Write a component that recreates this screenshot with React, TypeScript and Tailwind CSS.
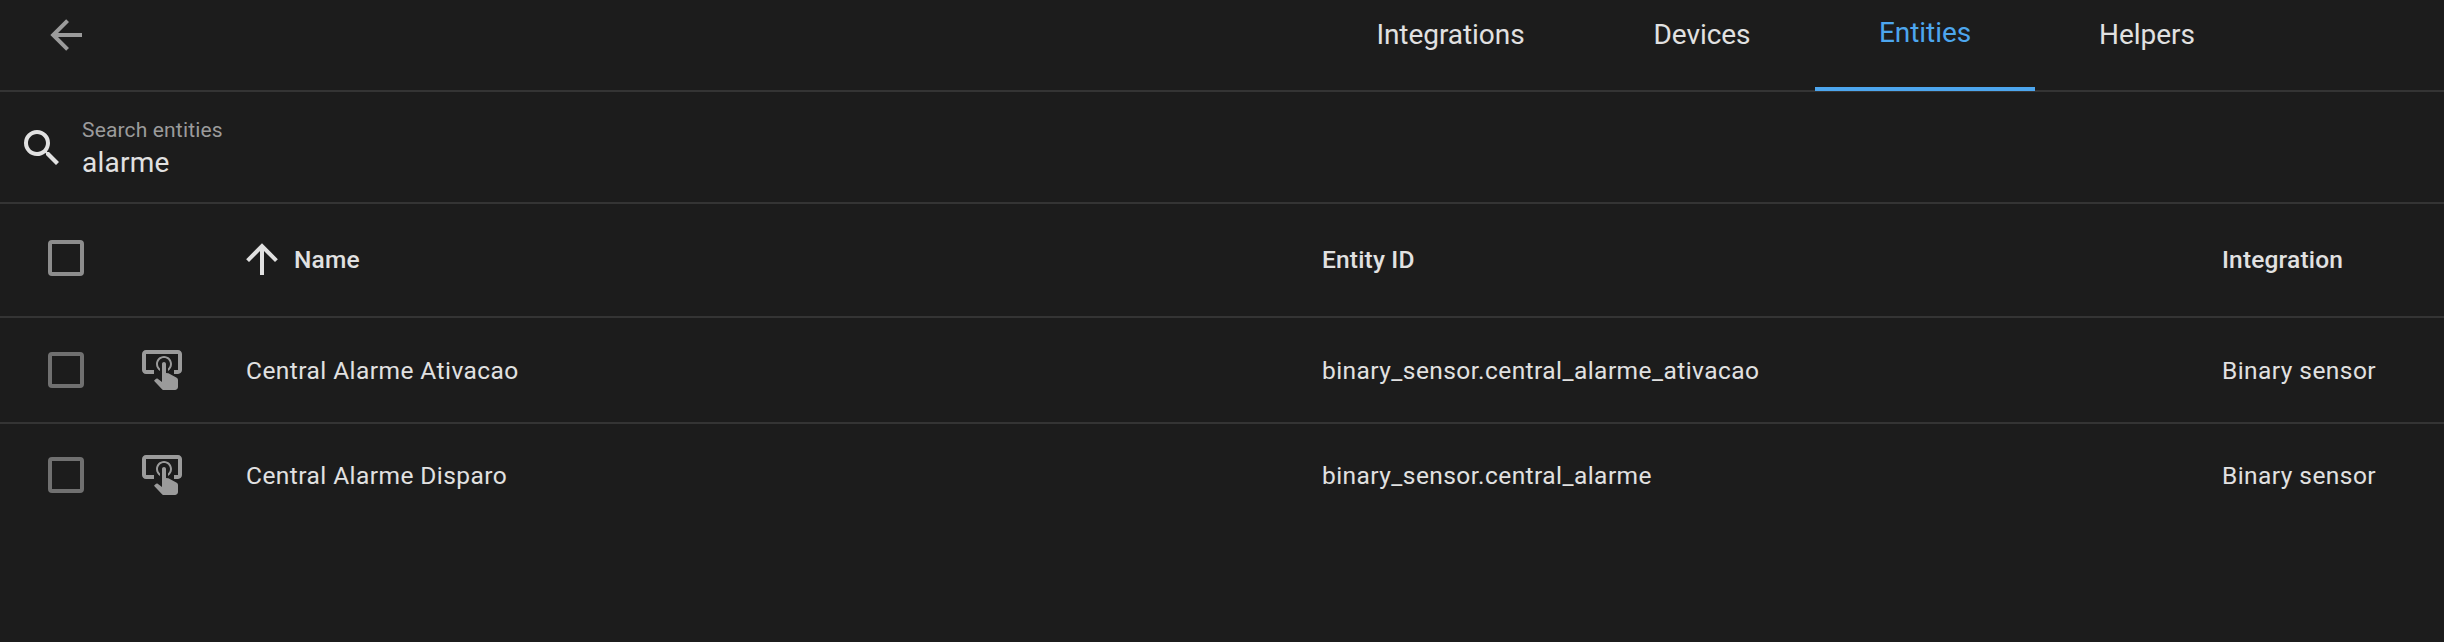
import React from "react";

const icons = {
  back: "M20,11V13H8L13.5,18.5L12.08,19.92L4.16,12L12.08,4.08L13.5,5.5L8,11H20Z",
  up: "M13,20H11V8L5.5,13.5L4.08,12.08L12,4.16L19.92,12.08L18.5,13.5L13,8V20Z",
  search:
    "M9.5,3A6.5,6.5 0 0,1 16,9.5C16,11.11 15.41,12.59 14.44,13.73L14.71,14H15.5L20.5,19L19,20.5L14,15.5V14.71L13.73,14.44C12.59,15.41 11.11,16 9.5,16A6.5,6.5 0 0,1 3,9.5A6.5,6.5 0 0,1 9.5,3M9.5,5C7,5 5,7 5,9.5C5,12 7,14 9.5,14C12,14 14,12 14,9.5C14,7 12,5 9.5,5Z",
  tapButton:
    "M13 5C15.21 5 17 6.79 17 9C17 10.5 16.2 11.77 15 12.46V11.24C15.61 10.69 16 9.89 16 9C16 7.34 14.66 6 13 6S10 7.34 10 9C10 9.89 10.39 10.69 11 11.24V12.46C9.8 11.77 9 10.5 9 9C9 6.79 10.79 5 13 5M20 20.5C19.97 21.32 19.32 21.97 18.5 22H13C12.62 22 12.26 21.85 12 21.57L8 17.37L8.74 16.6C8.93 16.39 9.2 16.28 9.5 16.28H9.7L12 18V9C12 8.45 12.45 8 13 8S14 8.45 14 9V13.47L15.21 13.6L19.15 15.79C19.68 16.03 20 16.56 20 17.14V20.5M20 2H4C2.9 2 2 2.9 2 4V12C2 13.11 2.9 14 4 14H8V12L4 12L4 4H20L20 12H18V14H20V13.97L20.04 14C21.13 13.93 22 13.03 22 12V4C22 2.9 21.11 2 20 2Z",
};

function Icon({ path, className = "" }: { path: string; className?: string }) {
  return (
    <svg viewBox="0 0 24 24" className={`size-12 shrink-0 fill-current ${className}`}>
      <path d={path} />
    </svg>
  );
}

const tabs = [
  { label: "Integrations", width: "w-[277px]" },
  { label: "Devices", width: "w-[226px]" },
  { label: "Entities", width: "w-[220px]" },
  { label: "Helpers", width: "w-[224px]" },
];
const activeTab = "Entities";

const rows = [
  { name: "Central Alarme Ativacao", id: "binary_sensor.central_alarme_ativacao", integration: "Binary sensor" },
  { name: "Central Alarme Disparo", id: "binary_sensor.central_alarme", integration: "Binary sensor" },
];

export default function App() {
  return (
    <div className="h-[642px] w-full overflow-hidden bg-[#1c1c1c] font-['Roboto',sans-serif] text-[#e1e1e1]">
      <header className="flex h-[92px] border-b-2 border-[#343434]">
        <button className="ml-[42px] mt-[11px] size-12 text-[#9b9b9b]" aria-label="Back">
          <Icon path={icons.back} />
        </button>
        <nav className="ml-[1222px] flex h-[91px] text-center text-[28px] leading-[42px] tracking-[-0.05px]">
          {tabs.map(({ label, width }) => (
            <div
              key={label}
              className={`${width} ${
                label === activeTab
                  ? "relative border-b-4 border-[#4da6ee] pt-[12px] text-[#4da6ee]"
                  : "pt-[14px]"
              }`}
            >
              {label}
            </div>
          ))}
        </nav>
      </header>

      <div className="flex h-[112px] border-b-2 border-[#343434] pl-[18px] pt-[23px]">
        <Icon path={icons.search} className="mt-[9px]" />
        <div className="ml-[16px] flex flex-col pt-[3px]">
          <label className="text-[21px] leading-[24px] tracking-[0.0075em] text-[#9b9b9b]">Search entities</label>
          <span className="mt-[3px] text-[28px] leading-[36px] tracking-[0.009375em]">alarme</span>
        </div>
      </div>

      <div className="flex h-[114px] items-center border-b-2 border-[#343434] text-[24.5px] font-medium tracking-[0.0071428571em]">
        <div className="flex w-[238px] pb-[4px] pl-12">
          <div className="size-9 rounded-[4px] border-4 border-[#8d8d8d]" />
        </div>
        <div className="flex w-[1084px] items-center">
          <Icon path={icons.up} className="-mt-[2px]" />
          <span className="ml-[8px]">Name</span>
        </div>
        <div className="w-[900px]">Entity ID</div>
        <div>Integration</div>
      </div>

      {rows.map((row, i) => (
        <div
          key={row.id}
          className={`flex items-center text-[24.5px] tracking-[0.0178571429em] ${
            i < rows.length - 1 ? "h-[106px] border-b-2 border-[#343434]" : "h-[102px]"
          }`}
        >
          <div className="flex w-[138px] pl-12">
            <div className="size-9 rounded-[4px] border-4 border-[#707070]" />
          </div>
          <div className="flex w-[108px] text-[#9b9b9b]">
            <Icon path={icons.tapButton} />
          </div>
          <div className="w-[1076px] pt-[2px]">{row.name}</div>
          <div className="w-[900px] pt-[2px]">{row.id}</div>
          <div className="pt-[2px]">{row.integration}</div>
        </div>
      ))}
    </div>
  );
}
